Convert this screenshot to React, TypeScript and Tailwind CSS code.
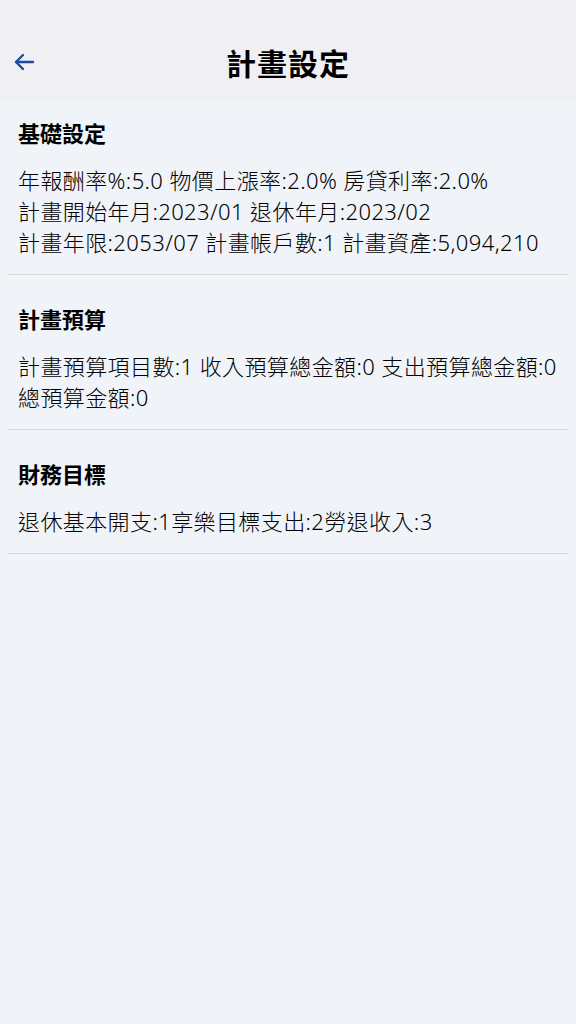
const font = { fontFamily: '"Noto Sans", "Noto Sans CJK TC", sans-serif' };

interface Section {
  title: string;
  lines: string[];
}

const sections: Section[] = [
  {
    title: "基礎設定",
    lines: [
      "年報酬率%:5.0 物價上漲率:2.0% 房貸利率:2.0%",
      "計畫開始年月:2023/01 退休年月:2023/02",
      "計畫年限:2053/07 計畫帳戶數:1 計畫資產:5,094,210",
    ],
  },
  {
    title: "計畫預算",
    lines: ["計畫預算項目數:1 收入預算總金額:0 支出預算總金額:0", "總預算金額:0"],
  },
  {
    title: "財務目標",
    lines: ["退休基本開支:1享樂目標支出:2勞退收入:3"],
  },
];

export default function App() {
  return (
    <div className="min-h-[1024px] w-[576px] bg-[#f0f3f7] text-black" style={font}>
      {/* Header */}
      <div className="relative h-[102px] bg-[#efeff4] flex items-center justify-center pt-[26px]">
        <button className="absolute left-[12px] top-[50px] text-[#1d4c9c]">
          <svg width="24" height="24" viewBox="0 0 24 24" fill="none" stroke="currentColor" strokeWidth="2.4" strokeLinecap="round" strokeLinejoin="round">
            <path d="M21 12H4" />
            <path d="M11 5l-7 7 7 7" />
          </svg>
        </button>
        <h1 className="text-[30px] font-bold leading-none tracking-[1px]">計畫設定</h1>
      </div>

      {/* Sections */}
      <div className="mx-2">
        {sections.map((s, idx) => (
          <div key={s.title} className={`border-b border-[#d6d8dc] px-[10px] pb-4 ${idx === 0 ? "pt-4" : "pt-[29px]"}`}>
            <h2 className="text-[22px] font-bold leading-[31px] mb-4">{s.title}</h2>
            {s.lines.map((l) => (
              <p key={l} className="text-[22px] font-light leading-[31px] tracking-[0.4px] text-black whitespace-nowrap">
                {l}
              </p>
            ))}
          </div>
        ))}
      </div>
    </div>
  );
}
